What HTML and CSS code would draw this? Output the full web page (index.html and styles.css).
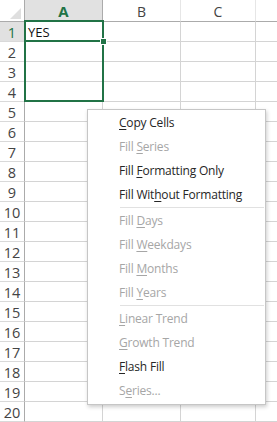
FILE: index.html
```html
<!DOCTYPE html>
<html>
<head>
<meta charset="utf-8">
<link rel="stylesheet" href="styles.css">
</head>
<body>
<div class="sheet">
  <div class="grid">
    <div class="corner"><span class="tri"></span></div>
    <div class="colhead active">A</div>
    <div class="colhead">B</div>
    <div class="colhead">C</div>
    <div class="colhead last"></div>

    <div class="rowhead active">1</div><div class="cell">YES</div><div class="cell"></div><div class="cell"></div><div class="cell last"></div>
    <div class="rowhead">2</div><div class="cell"></div><div class="cell"></div><div class="cell"></div><div class="cell last"></div>
    <div class="rowhead">3</div><div class="cell"></div><div class="cell"></div><div class="cell"></div><div class="cell last"></div>
    <div class="rowhead">4</div><div class="cell"></div><div class="cell"></div><div class="cell"></div><div class="cell last"></div>
    <div class="rowhead">5</div><div class="cell"></div><div class="cell"></div><div class="cell"></div><div class="cell last"></div>
    <div class="rowhead">6</div><div class="cell"></div><div class="cell"></div><div class="cell"></div><div class="cell last"></div>
    <div class="rowhead">7</div><div class="cell"></div><div class="cell"></div><div class="cell"></div><div class="cell last"></div>
    <div class="rowhead">8</div><div class="cell"></div><div class="cell"></div><div class="cell"></div><div class="cell last"></div>
    <div class="rowhead">9</div><div class="cell"></div><div class="cell"></div><div class="cell"></div><div class="cell last"></div>
    <div class="rowhead">10</div><div class="cell"></div><div class="cell"></div><div class="cell"></div><div class="cell last"></div>
    <div class="rowhead">11</div><div class="cell"></div><div class="cell"></div><div class="cell"></div><div class="cell last"></div>
    <div class="rowhead">12</div><div class="cell"></div><div class="cell"></div><div class="cell"></div><div class="cell last"></div>
    <div class="rowhead">13</div><div class="cell"></div><div class="cell"></div><div class="cell"></div><div class="cell last"></div>
    <div class="rowhead">14</div><div class="cell"></div><div class="cell"></div><div class="cell"></div><div class="cell last"></div>
    <div class="rowhead">15</div><div class="cell"></div><div class="cell"></div><div class="cell"></div><div class="cell last"></div>
    <div class="rowhead">16</div><div class="cell"></div><div class="cell"></div><div class="cell"></div><div class="cell last"></div>
    <div class="rowhead">17</div><div class="cell"></div><div class="cell"></div><div class="cell"></div><div class="cell last"></div>
    <div class="rowhead">18</div><div class="cell"></div><div class="cell"></div><div class="cell"></div><div class="cell last"></div>
    <div class="rowhead">19</div><div class="cell"></div><div class="cell"></div><div class="cell"></div><div class="cell last"></div>
    <div class="rowhead">20</div><div class="cell"></div><div class="cell"></div><div class="cell"></div><div class="cell last"></div>
  </div>

  <div class="range"></div>
  <div class="activecell"></div>
  <div class="handle"></div>

  <div class="menu">
    <div class="item"><u>C</u>opy Cells</div>
    <div class="item off">Fill <u>S</u>eries</div>
    <div class="item">Fill <u>F</u>ormatting Only</div>
    <div class="item">Fill Wit<u>h</u>out Formatting</div>
    <div class="sep"></div>
    <div class="item off">Fill <u>D</u>ays</div>
    <div class="item off">Fill <u>W</u>eekdays</div>
    <div class="item off">Fill <u>M</u>onths</div>
    <div class="item off">Fill <u>Y</u>ears</div>
    <div class="sep"></div>
    <div class="item off"><u>L</u>inear Trend</div>
    <div class="item off"><u>G</u>rowth Trend</div>
    <div class="item"><u>F</u>lash Fill</div>
    <div class="item off">S<u>e</u>ries...</div>
  </div>
</div>
</body>
</html>
```
FILE: styles.css
```css
html, body {
  margin: 0;
  padding: 0;
  background: #ffffff;
}
.sheet {
  position: relative;
  width: 277px;
  height: 422px;
  overflow: hidden;
  font-family: "Open Sans", "Noto Sans", sans-serif;
}
.grid {
  display: grid;
  grid-template-columns: 25px 78px 78px 75px 1fr;
  grid-template-rows: 22px repeat(20, 20px);
}
.grid > div {
  box-sizing: border-box;
}
.corner {
  position: relative;
  border-right: 1px solid #ababab;
  border-bottom: 1px solid #ababab;
  background: #fff;
}
.tri {
  position: absolute;
  right: 3px;
  bottom: 2px;
  width: 0;
  height: 0;
  border-left: 11px solid transparent;
  border-bottom: 11px solid #dfdfdf;
}
.colhead {
  border-bottom: 1px solid #ababab;
  border-right: 1px solid #e6e6e6;
  font-family: "Open Sans", sans-serif;
  font-size: 14px;
  color: #444;
  display: flex;
  align-items: center;
  justify-content: center;
  padding-top: 1px;
}
.colhead.active {
  background: #e1e1e1;
  color: #217346;
  font-weight: 700;
  font-size: 15px;
  border-bottom: 2px solid #217346;
  border-right: 1px solid #ababab;
}
.colhead.last {
  border-right: none;
}
.rowhead {
  border-right: 1px solid #ababab;
  border-bottom: 1px solid #d9d9d9;
  font-size: 14.5px;
  color: #444;
  display: flex;
  align-items: center;
  justify-content: center;
  padding-top: 1px;
}
.rowhead.active {
  background: #e1e1e1;
  color: #217346;
}
.cell {
  border-right: 1px solid #d4d4d4;
  border-bottom: 1px solid #d4d4d4;
  font-size: 13px;
  color: #111;
  padding-left: 3px;
  line-height: 19px;
  padding-top: 1px;
}
.cell.last {
  border-right: none;
}
.range {
  position: absolute;
  left: 24px;
  top: 20px;
  width: 80px;
  height: 82px;
  box-sizing: border-box;
  border: 2px solid #217346;
}
.activecell {
  position: absolute;
  left: 24px;
  top: 40px;
  width: 79px;
  height: 2px;
  background: #217346;
}
.handle {
  position: absolute;
  left: 100px;
  top: 38px;
  width: 5px;
  height: 5px;
  background: #217346;
  border: 1px solid #fff;
}
.menu {
  position: absolute;
  left: 87px;
  top: 109px;
  width: 179px;
  box-sizing: border-box;
  background: #fff;
  border: 1px solid #c6c6c6;
  padding: 1px 0 1px 0;
  box-shadow: 1px 2px 4px rgba(0, 0, 0, 0.2);
  font-family: "Open Sans", sans-serif;
  font-size: 12px;
  letter-spacing: -0.2px;
}
.item {
  height: 24px;
  line-height: 24px;
  padding-left: 31px;
  color: #262626;
  white-space: nowrap;
}
.item.off {
  color: #a6a6a6;
}
.item u {
  text-decoration: underline;
  text-underline-offset: 2px;
}
.sep {
  height: 1px;
  margin: 0 1px 1px 32px;
  background: #e1e1e1;
}
```
